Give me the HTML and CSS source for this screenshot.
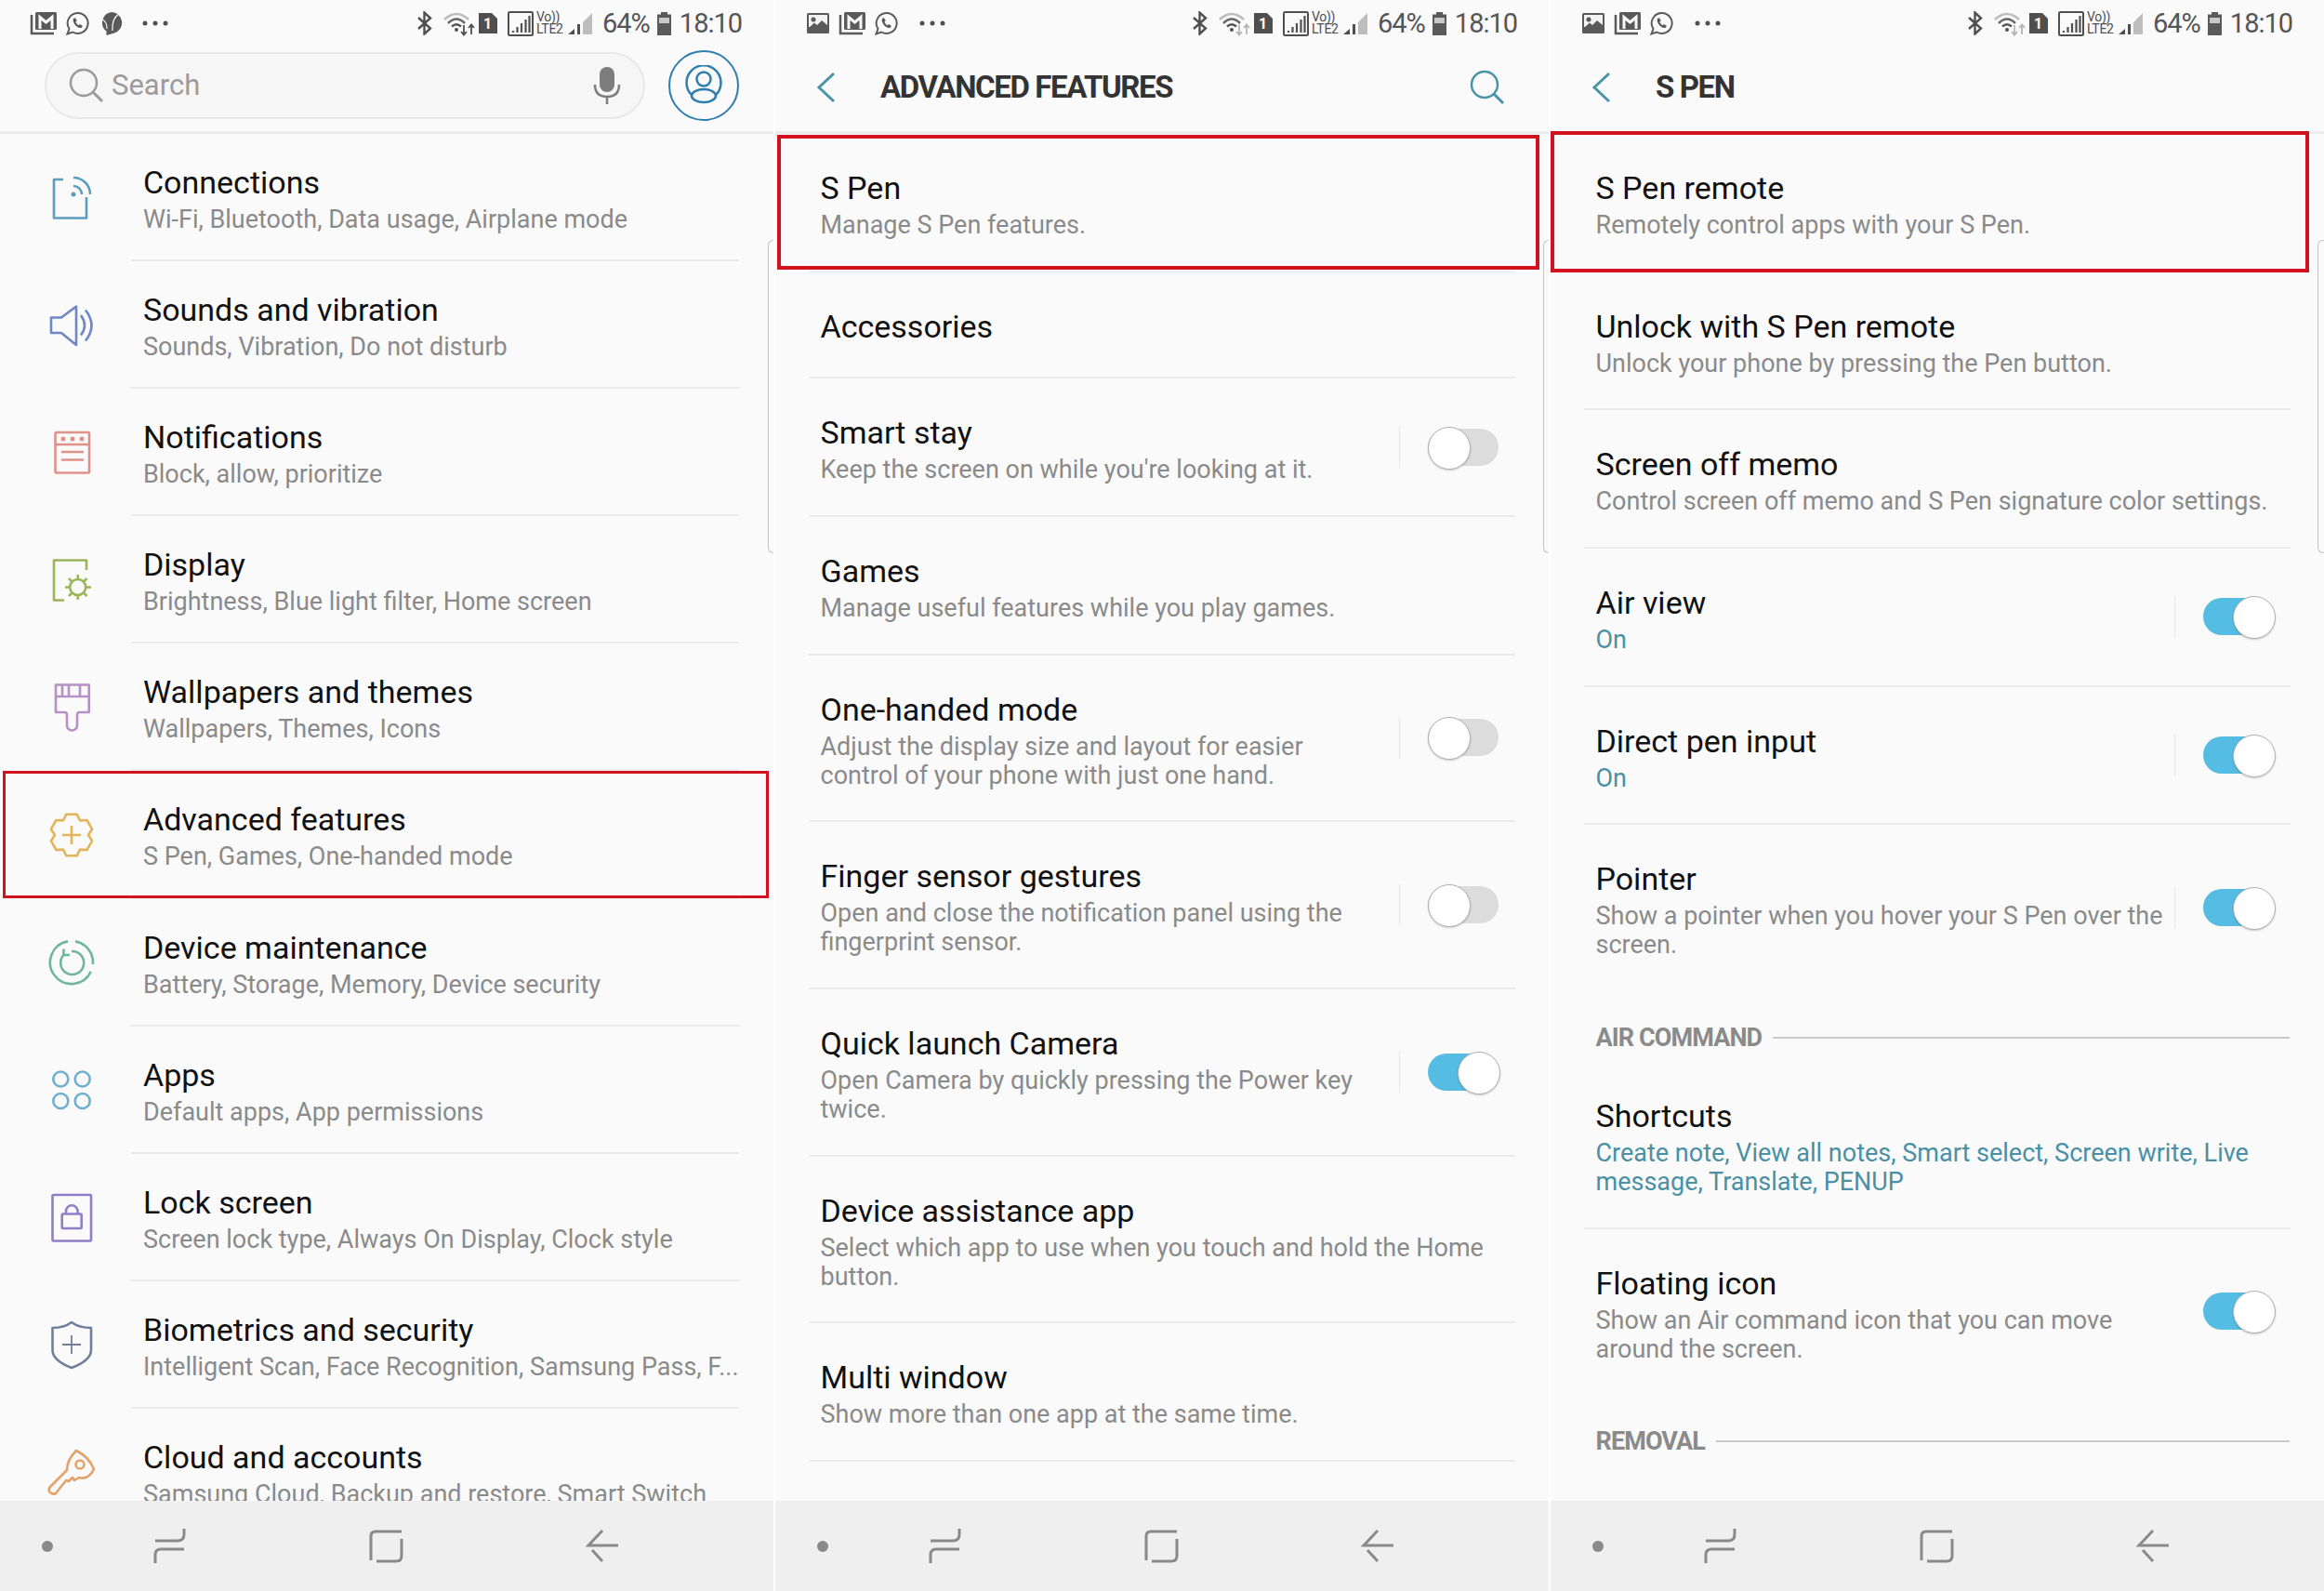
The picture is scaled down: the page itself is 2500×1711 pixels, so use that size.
FILE: index.html
```html
<!DOCTYPE html>
<html lang="en">
<head>
    <meta charset="UTF-8">
    <title>Settings - S Pen remote</title>
    <link rel="stylesheet" href="styles.css">
</head>
<body>
    <!-- status bar icons, reused on all three screens -->
    <svg class="sprite" xmlns="http://www.w3.org/2000/svg">
        <symbol id="s-gmail" viewBox="0 0 30 26">
            <path d="M2 4V24H26" fill="none" stroke="#5a5a5a" stroke-width="2.5"/>
            <rect x="6" y="1" width="23" height="19" rx="1.5" fill="#5a5a5a"/>
            <path d="M11 19V6.5L17.5 12L24 6.5V19" fill="none" stroke="#fafafa" stroke-width="3"/>
        </symbol>
        <symbol id="s-whatsapp" viewBox="0 0 26 26">
            <path d="M13.5 2a11 11 0 1 1-5.4 20.5L2.500 24.500l2-5.500A11 11 0 0 1 13.500 2z" fill="none" stroke="#5a5a5a" stroke-width="2"/>
            <path d="M9.500 7.500C8 9 8.500 11.500 10.500 14.500C12.500 17 15 18.500 17.500 18L19 16L16 14L14.800 15.200C13 14.500 12 13 11.500 11.500L12.800 10L10.800 7.200Z" fill="#5a5a5a"/>
        </symbol>
        <symbol id="s-chat" viewBox="0 0 24 27">
            <path d="M12 1a11.500 11.500 0 0 1 3 22.500L6.500 26L6.500 21.500A11.500 11.500 0 0 1 12 1z" fill="#5a5a5a"/>
            <path d="M20 3Q12 8 13 21M2 9Q7 11 7 19" fill="none" stroke="#fafafa" stroke-width="1.200"/>
        </symbol>
        <symbol id="s-gallery" viewBox="0 0 24 22">
            <rect width="24" height="22" rx="1.500" fill="#5a5a5a"/>
            <rect x="2" y="2" width="20" height="13" fill="#f2f2f2"/>
            <circle cx="7" cy="7" r="2.500" fill="#5a5a5a"/>
            <path d="M2 16L8 10.500L11 13L16 8L22 13V18H2Z" fill="#5a5a5a"/>
        </symbol>
        <symbol id="s-bt" viewBox="0 0 17 26">
            <path d="M2 7L15 18.500L8.500 24.500V1.500L15 7.500L2 19" fill="none" stroke="#4f4f4f" stroke-width="2.400"/>
        </symbol>
        <symbol id="s-wifi" viewBox="0 0 34 27">
            <path d="M1 9Q14 -3 27 9" fill="none" stroke="#bdbdbd" stroke-width="2.500"/>
            <path d="M5 13Q14 4 23 13" fill="none" stroke="#666" stroke-width="2.500"/>
            <path d="M9 16.500Q14 12 19 16.500" fill="none" stroke="#555" stroke-width="2.500"/>
            <circle cx="14" cy="20" r="2" fill="#4f4f4f"/>
            <path d="M22 15V25M19 22L22 25.500L25 22M30 25V15M27 18L30 14.500L33 18" fill="none" stroke="currentColor" stroke-width="1.800"/>
        </symbol>
        <symbol id="s-sim" viewBox="0 0 22 22">
            <path d="M1 0H15L21 6V22H1Z" fill="#4f4f4f"/>
            <text x="10.500" y="17" class="sim-num">1</text>
        </symbol>
        <symbol id="s-signal" viewBox="0 0 28 27">
            <rect x="1" y="1" width="26" height="25" rx="1.500" fill="none" stroke="#4f4f4f" stroke-width="2"/>
            <path d="M6 23V21M10.500 23V17M15 23V13M19.500 23V9M23.500 23V5" stroke="#4f4f4f" stroke-width="2.200"/>
        </symbol>
        <symbol id="s-signal2" viewBox="0 0 27 25">
            <path d="M0 24L7 18V24ZM10 13H13V24H10Z" fill="#4f4f4f"/>
            <path d="M16 11L26 1V24H16Z" fill="#bdbdbd"/>
        </symbol>
        <symbol id="s-battery" viewBox="0 0 15 25">
            <path d="M4 0H11V2.500H15V25H0V2.500H4Z" fill="#5a5a5a"/>
            <rect x="2" y="6" width="11" height="6" fill="#c8c8c8"/>
        </symbol>
        <symbol id="s-dots" viewBox="0 0 28 6">
            <circle cx="3" cy="3" r="2.500" fill="#4f4f4f"/>
            <circle cx="14" cy="3" r="2.500" fill="#4f4f4f"/>
            <circle cx="25" cy="3" r="2.500" fill="#4f4f4f"/>
        </symbol>
        <symbol id="s-nav-recent" viewBox="0 0 35 39">
            <path d="M33 1V7Q33 14 26 14H2M33 23H8Q2 23 2 29V38" fill="none" stroke="#8a8a8a" stroke-width="3"/>
        </symbol>
        <symbol id="s-nav-home" viewBox="0 0 37 36">
            <path d="M35 2H7Q2 2 2 7V33M35 10V28Q35 34 29 34H8" fill="none" stroke="#8a8a8a" stroke-width="3"/>
        </symbol>
        <symbol id="s-nav-back" viewBox="0 0 36 37">
            <path d="M18 2L3 18H35M7 23L18 35" fill="none" stroke="#8a8a8a" stroke-width="3"/>
        </symbol>
        <symbol id="s-back" viewBox="0 0 22 34">
            <path d="M19 2L3 17L19 32" fill="none" stroke="#4a93a8" stroke-width="3"/>
        </symbol>
        <symbol id="s-search" viewBox="0 0 38 38">
            <circle cx="16" cy="16" r="14" fill="none" stroke="currentColor" stroke-width="2.500"/>
            <path d="M26 26L36 36" stroke="currentColor" stroke-width="3"/>
        </symbol>
    </svg>

    <div class="screens">

        <!-- settings -->
        <section class="panel">
            <div class="status">
                <svg class="ic ic-mail-first"><use href="#s-gmail"/></svg>
                <svg class="ic ic-wa"><use href="#s-whatsapp"/></svg>
                <svg class="ic ic-chat"><use href="#s-chat"/></svg>
                <svg class="ic ic-dots ic-dots-first"><use href="#s-dots"/></svg>
                <div class="status-right">
                    <svg class="ic ic-bt"><use href="#s-bt"/></svg>
                    <svg class="ic ic-wifi"><use href="#s-wifi"/></svg>
                    <svg class="ic ic-sim"><use href="#s-sim"/></svg>
                    <svg class="ic ic-signal"><use href="#s-signal"/></svg>
                    <span class="volte">Vo))<br>LTE2</span>
                    <svg class="ic ic-signal2"><use href="#s-signal2"/></svg>
                    <span class="percent">64%</span>
                    <svg class="ic ic-battery"><use href="#s-battery"/></svg>
                    <span class="clock">18:10</span>
                </div>
            </div>
            <header class="topbar topbar-search">
                <div class="searchbox">
                    <svg class="searchbox-icon"><use href="#s-search"/></svg>
                    <span class="searchbox-text">Search</span>
                    <svg class="mic" viewBox="0 0 30 40">
                        <rect x="7" y="0" width="16" height="27" rx="8" fill="#7d7d7d"/>
                        <path d="M2 19Q2 32 15 32Q28 32 28 19M15 32V40" fill="none" stroke="#7d7d7d" stroke-width="2.500"/>
                    </svg>
                </div>
                <div class="avatar">
                    <svg viewBox="0 0 44 44">
                        <path d="M9 32A18.500 18.500 0 1 1 35 32" fill="none" stroke="#2f7fae" stroke-width="2.500"/>
                        <circle cx="22" cy="15" r="7.500" fill="none" stroke="#2f7fae" stroke-width="2.500"/>
                        <ellipse cx="22" cy="33" rx="13" ry="7" fill="none" stroke="#2f7fae" stroke-width="2.500"/>
                    </svg>
                </div>
            </header>
            <div class="list">
                <div class="menu-row">
                    <svg class="menu-icon tint-blue" viewBox="0 0 56 56">
                        <path d="M19 8H9V49.500H44V27"/><circle cx="30" cy="24" r="2.500" class="dot"/>
                        <path d="M30 15A9 9 0 0 1 39 24M30 6A18 18 0 0 1 48 24"/>
                    </svg>
                    <div class="menu-body"><div class="title">Connections</div><div class="sub">Wi-Fi, Bluetooth, Data usage, Airplane mode</div></div>
                </div>
                <div class="menu-row">
                    <svg class="menu-icon tint-indigo" viewBox="0 0 56 56">
                        <path d="M6 19.500H17L33 7.500V49L17 36H6Z"/>
                        <path d="M38 17Q46 28 38 38.500M43 11.500Q56 28 43 44.500"/>
                    </svg>
                    <div class="menu-body"><div class="title">Sounds and vibration</div><div class="sub">Sounds, Vibration, Do not disturb</div></div>
                </div>
                <div class="menu-row">
                    <svg class="menu-icon tint-salmon" viewBox="0 0 56 56">
                        <rect x="10.500" y="6" width="36.500" height="43.500" rx="1"/>
                        <path d="M10.500 19H47M17 27H41M17 35.500H41"/>
                        <circle cx="19" cy="13" r="2.500" class="dot"/><circle cx="29" cy="13" r="2.500" class="dot"/><circle cx="39" cy="13" r="2.500" class="dot"/>
                    </svg>
                    <div class="menu-body"><div class="title">Notifications</div><div class="sub">Block, allow, prioritize</div></div>
                </div>
                <div class="menu-row">
                    <svg class="menu-icon tint-green" viewBox="0 0 56 56">
                        <path d="M20 49.500H9V6.500H44V17"/>
                        <circle cx="34.700" cy="35.500" r="8.500"/>
                        <path d="M34.700 22V27M34.700 44V49M21 35.500H26M43.500 35.500H49M25 26L28.500 29.500M41 41.500L44.500 45M44.500 26L41 29.500M28.500 41.500L25 45"/>
                    </svg>
                    <div class="menu-body"><div class="title">Display</div><div class="sub">Brightness, Blue light filter, Home screen</div></div>
                </div>
                <div class="menu-row">
                    <svg class="menu-icon tint-violet" viewBox="0 0 56 56">
                        <path d="M11 3.500H46.700V33H36.500Q34 33 34 36V47A5.500 5.500 0 0 1 23 47V36Q23 33 20.500 33H11Z"/>
                        <path d="M11 16H46.700M18 3.500V15M25 3.500V15M37 3.500V15"/>
                    </svg>
                    <div class="menu-body"><div class="title">Wallpapers and themes</div><div class="sub">Wallpapers, Themes, Icons</div></div>
                </div>
                <div class="menu-row">
                    <svg class="menu-icon tint-amber" viewBox="0 0 56 56">
                        <path d="M22.400 5.700H33.600L37 12.400L44.500 12L50.100 21.700L46 28L50.100 34.300L44.500 44L37 43.600L33.600 50.300H22.400L19 43.600L11.500 44L5.900 34.300L10 28L5.900 21.700L11.500 12L19 12.400Z"/>
                        <path d="M18 28H38M28 18V38"/>
                    </svg>
                    <div class="menu-body"><div class="title">Advanced features</div><div class="sub">S Pen, Games, One-handed mode</div></div>
                </div>
                <div class="menu-row">
                    <svg class="menu-icon tint-teal" viewBox="0 0 56 56">
                        <path d="M32 5.400A23 23 0 0 1 50.900 30M48.800 37.700A23 23 0 1 1 24 5.400"/>
                        <path d="M20 19.500A12.500 12.500 0 1 0 28 16M19.500 13.500V20H26"/>
                    </svg>
                    <div class="menu-body"><div class="title">Device maintenance</div><div class="sub">Battery, Storage, Memory, Device security</div></div>
                </div>
                <div class="menu-row">
                    <svg class="menu-icon tint-sky" viewBox="0 0 56 56">
                        <circle cx="16.300" cy="16.500" r="8"/><circle cx="39.700" cy="16.500" r="8"/>
                        <circle cx="16.300" cy="40" r="8"/><circle cx="39.700" cy="40" r="8"/>
                    </svg>
                    <div class="menu-body"><div class="title">Apps</div><div class="sub">Default apps, App permissions</div></div>
                </div>
                <div class="menu-row">
                    <svg class="menu-icon tint-purple" viewBox="0 0 56 56">
                        <rect x="7.500" y="4" width="41.500" height="49.500" rx="1"/>
                        <rect x="17.700" y="24.500" width="21" height="15.500" rx="1"/>
                        <path d="M22 24.500V21.500A6.200 6.200 0 0 1 34.500 21.500V24.500"/>
                    </svg>
                    <div class="menu-body"><div class="title">Lock screen</div><div class="sub">Screen lock type, Always On Display, Clock style</div></div>
                </div>
                <div class="menu-row">
                    <svg class="menu-icon tint-slate" viewBox="0 0 56 56">
                        <path d="M7.500 10Q20 10 28 4Q36 10 49 10V34Q49 45 28 53Q7.500 45 7.500 34Z"/>
                        <path d="M18 28H38M28 18V38" class="thin"/>
                    </svg>
                    <div class="menu-body"><div class="title">Biometrics and security</div><div class="sub sub-cut">Intelligent Scan, Face Recognition, Samsung Pass, F...</div></div>
                </div>
                <div class="menu-row">
                    <svg class="menu-icon tint-orange" viewBox="0 0 56 56">
                        <path d="M33 5Q47 12 52 25Q46 37 36 34L31 37L29 34L25 38L22 37L11 51Q7 53 4 49Q3 46 5 44L23 26Q23 15 33 5Z"/>
                        <circle cx="37" cy="20" r="4.500"/>
                    </svg>
                    <div class="menu-body"><div class="title">Cloud and accounts</div><div class="sub">Samsung Cloud, Backup and restore, Smart Switch</div></div>
                </div>
            </div>
            <nav class="navbar">
                <span class="nav-dot"></span>
                <svg class="nav-recent"><use href="#s-nav-recent"/></svg>
                <svg class="nav-home"><use href="#s-nav-home"/></svg>
                <svg class="nav-back"><use href="#s-nav-back"/></svg>
            </nav>
            <div class="mark mark-advanced"></div>
            <div class="edge-handle"></div>
        </section>

        <!-- advanced features -->
        <section class="panel">
            <div class="status">
                <svg class="ic ic-gallery"><use href="#s-gallery"/></svg>
                <svg class="ic ic-mail"><use href="#s-gmail"/></svg>
                <svg class="ic ic-wa2"><use href="#s-whatsapp"/></svg>
                <svg class="ic ic-dots ic-dots-second"><use href="#s-dots"/></svg>
                <div class="status-right">
                    <svg class="ic ic-bt"><use href="#s-bt"/></svg>
                    <svg class="ic ic-wifi wifi-idle"><use href="#s-wifi"/></svg>
                    <svg class="ic ic-sim"><use href="#s-sim"/></svg>
                    <svg class="ic ic-signal"><use href="#s-signal"/></svg>
                    <span class="volte">Vo))<br>LTE2</span>
                    <svg class="ic ic-signal2"><use href="#s-signal2"/></svg>
                    <span class="percent">64%</span>
                    <svg class="ic ic-battery"><use href="#s-battery"/></svg>
                    <span class="clock">18:10</span>
                </div>
            </div>
            <header class="topbar">
                <svg class="back"><use href="#s-back"/></svg>
                <h1 class="page-title">ADVANCED FEATURES</h1>
                <svg class="top-search"><use href="#s-search"/></svg>
            </header>
            <div class="list">
                <div class="row"><div class="row-text"><div class="title">S Pen</div><div class="sub">Manage S Pen features.</div></div></div>
                <div class="row"><div class="row-text"><div class="title">Accessories</div></div></div>
                <div class="row">
                    <div class="row-text"><div class="title">Smart stay</div><div class="sub">Keep the screen on while you're looking at it.</div></div>
                    <span class="sep"></span><span class="switch"></span>
                </div>
                <div class="row"><div class="row-text"><div class="title">Games</div><div class="sub">Manage useful features while you play games.</div></div></div>
                <div class="row">
                    <div class="row-text"><div class="title">One-handed mode</div><div class="sub">Adjust the display size and layout for easier<br>control of your phone with just one hand.</div></div>
                    <span class="sep"></span><span class="switch"></span>
                </div>
                <div class="row">
                    <div class="row-text"><div class="title">Finger sensor gestures</div><div class="sub">Open and close the notification panel using the<br>fingerprint sensor.</div></div>
                    <span class="sep"></span><span class="switch"></span>
                </div>
                <div class="row">
                    <div class="row-text"><div class="title">Quick launch Camera</div><div class="sub">Open Camera by quickly pressing the Power key<br>twice.</div></div>
                    <span class="sep"></span><span class="switch on"></span>
                </div>
                <div class="row"><div class="row-text"><div class="title">Device assistance app</div><div class="sub">Select which app to use when you touch and hold the Home<br>button.</div></div></div>
                <div class="row"><div class="row-text"><div class="title">Multi window</div><div class="sub">Show more than one app at the same time.</div></div></div>
            </div>
            <nav class="navbar">
                <span class="nav-dot"></span>
                <svg class="nav-recent"><use href="#s-nav-recent"/></svg>
                <svg class="nav-home"><use href="#s-nav-home"/></svg>
                <svg class="nav-back"><use href="#s-nav-back"/></svg>
            </nav>
            <div class="mark mark-spen"></div>
            <div class="edge-handle"></div>
        </section>

        <!-- s pen -->
        <section class="panel">
            <div class="status">
                <svg class="ic ic-gallery"><use href="#s-gallery"/></svg>
                <svg class="ic ic-mail"><use href="#s-gmail"/></svg>
                <svg class="ic ic-wa2"><use href="#s-whatsapp"/></svg>
                <svg class="ic ic-dots ic-dots-second"><use href="#s-dots"/></svg>
                <div class="status-right">
                    <svg class="ic ic-bt"><use href="#s-bt"/></svg>
                    <svg class="ic ic-wifi wifi-idle"><use href="#s-wifi"/></svg>
                    <svg class="ic ic-sim"><use href="#s-sim"/></svg>
                    <svg class="ic ic-signal"><use href="#s-signal"/></svg>
                    <span class="volte">Vo))<br>LTE2</span>
                    <svg class="ic ic-signal2"><use href="#s-signal2"/></svg>
                    <span class="percent">64%</span>
                    <svg class="ic ic-battery"><use href="#s-battery"/></svg>
                    <span class="clock">18:10</span>
                </div>
            </div>
            <header class="topbar">
                <svg class="back"><use href="#s-back"/></svg>
                <h1 class="page-title">S PEN</h1>
            </header>
            <div class="list">
                <div class="row"><div class="row-text"><div class="title">S Pen remote</div><div class="sub">Remotely control apps with your S Pen.</div></div></div>
                <div class="row"><div class="row-text"><div class="title">Unlock with S Pen remote</div><div class="sub">Unlock your phone by pressing the Pen button.</div></div></div>
                <div class="row"><div class="row-text"><div class="title">Screen off memo</div><div class="sub">Control screen off memo and S Pen signature color settings.</div></div></div>
                <div class="row">
                    <div class="row-text"><div class="title">Air view</div><div class="sub link">On</div></div>
                    <span class="sep"></span><span class="switch on"></span>
                </div>
                <div class="row">
                    <div class="row-text"><div class="title">Direct pen input</div><div class="sub link">On</div></div>
                    <span class="sep"></span><span class="switch on"></span>
                </div>
                <div class="row no-line">
                    <div class="row-text"><div class="title">Pointer</div><div class="sub">Show a pointer when you hover your S Pen over the<br>screen.</div></div>
                    <span class="sep"></span><span class="switch on"></span>
                </div>
                <div class="group"><span class="group-name">AIR COMMAND</span><span class="group-line"></span></div>
                <div class="row"><div class="row-text"><div class="title">Shortcuts</div><div class="sub link">Create note, View all notes, Smart select, Screen write, Live<br>message, Translate, PENUP</div></div></div>
                <div class="row no-line">
                    <div class="row-text"><div class="title">Floating icon</div><div class="sub">Show an Air command icon that you can move<br>around the screen.</div></div>
                    <span class="sep sep-blank"></span><span class="switch on"></span>
                </div>
                <div class="group"><span class="group-name">REMOVAL</span><span class="group-line"></span></div>
            </div>
            <nav class="navbar">
                <span class="nav-dot"></span>
                <svg class="nav-recent"><use href="#s-nav-recent"/></svg>
                <svg class="nav-home"><use href="#s-nav-home"/></svg>
                <svg class="nav-back"><use href="#s-nav-back"/></svg>
            </nav>
            <div class="mark mark-remote"></div>
            <div class="edge-handle edge-handle-last"></div>
        </section>

    </div>
</body>
</html>
```

FILE: styles.css
```css
/* General */
* {
    box-sizing: border-box;
}

html, body {
    margin: 0;
    padding: 0;
    background-color: #ffffff;
}

body {
    font-family: "Roboto", "Liberation Sans", sans-serif;
    width: 2500px;
    height: 1711px;
    overflow: hidden;
}

.sprite {
    position: absolute;
    width: 0;
    height: 0;
}

.screens {
    display: flex;
    gap: 2px;
    height: 1711px;
}

.panel {
    position: relative;
    width: 832px;
    height: 1711px;
    display: flex;
    flex-direction: column;
    background-color: #fafafa;
}

/* Status bar */
.status {
    height: 50px;
    flex: none;
    display: flex;
    align-items: center;
    padding-left: 32px;
    color: #555555;
}

.ic {
    flex: none;
    display: block;
}

.ic-mail-first { width: 30px; height: 26px; }
.ic-wa { width: 26px; height: 26px; margin-left: 8px; }
.ic-chat { width: 24px; height: 27px; margin-left: 12px; }
.ic-dots { width: 28px; height: 6px; }
.ic-dots-first { margin-left: 21px; }

.ic-gallery { width: 24px; height: 22px; margin-left: 2px; }
.ic-mail { width: 30px; height: 26px; margin-left: 10px; }
.ic-wa2 { width: 26px; height: 26px; margin-left: 8px; }
.ic-dots-second { margin-left: 23px; }

.status-right {
    display: flex;
    align-items: center;
    position: absolute;
    left: 448px;
    top: 0;
    height: 50px;
}

.ic-bt { width: 17px; height: 26px; }
.ic-wifi { width: 34px; height: 27px; margin-left: 12px; color: #4f4f4f; }
.wifi-idle { color: #b5b5b5; }
.ic-sim { width: 22px; height: 22px; margin-left: 3px; }
.ic-signal { width: 28px; height: 27px; margin-left: 10px; }
.ic-signal2 { width: 27px; height: 25px; margin-left: 3px; }
.ic-battery { width: 15px; height: 25px; margin-left: 8px; }

.sim-num {
    font-family: "Roboto", sans-serif;
    font-size: 16px;
    font-weight: 700;
    fill: #fafafa;
    text-anchor: middle;
}

.volte {
    font-size: 14px;
    line-height: 13px;
    color: #4f4f4f;
    margin-left: 3px;
    width: 31px;
    letter-spacing: -0.3px;
}

.percent,
.clock {
    font-size: 29px;
    line-height: 34px;
    letter-spacing: -1px;
    color: #555555;
}

.percent { margin-left: 10px; }
.clock { margin-left: 9px; }

/* Top bar */
.topbar {
    height: 94px;
    flex: none;
    display: flex;
    align-items: center;
    border-bottom: 3px solid #ececec;
    padding-bottom: 4px;
}

.topbar-search {
    padding-left: 48px;
    padding-bottom: 8px;
}

.searchbox {
    width: 646px;
    height: 72px;
    border: 2px solid #e8e8e8;
    border-radius: 36px;
    background-color: #f6f6f6;
    display: flex;
    align-items: center;
    padding-left: 24px;
    position: relative;
}

.searchbox-icon {
    width: 38px;
    height: 38px;
    color: #9b9b9b;
}

.searchbox-text {
    font-size: 31px;
    color: #9b9b9b;
    margin-left: 8px;
}

.mic {
    width: 30px;
    height: 40px;
    margin-left: auto;
    margin-right: 24px;
}

.avatar {
    width: 76px;
    height: 76px;
    margin-left: 25px;
    border: 2px solid #2f7fae;
    border-radius: 50%;
    display: flex;
    align-items: center;
    justify-content: center;
}

.avatar svg {
    width: 44px;
    height: 44px;
}

.back {
    width: 22px;
    height: 34px;
    margin-left: 44px;
}

.page-title {
    margin: 0 0 0 47px;
    font-size: 33px;
    font-weight: 700;
    color: #333333;
    letter-spacing: -1.4px;
}

.top-search {
    width: 38px;
    height: 38px;
    color: #4a93a8;
    margin-left: auto;
    margin-right: 47px;
}

/* Lists */
.list {
    flex: 1;
    min-height: 0;
    overflow: hidden;
}

.title {
    font-size: 34px;
    line-height: 44px;
    color: #111111;
}

.sub {
    font-size: 27px;
    line-height: 31px;
    margin-top: 3px;
    color: #8a8a8a;
}

.link {
    color: #4a90a4;
}

/* Rows of the settings screen */
.menu-row {
    height: 137.1px;
    display: flex;
    align-items: center;
    padding-left: 48.7px;
}

.menu-icon {
    width: 56px;
    height: 56px;
    flex: none;
    overflow: visible;
    fill: none;
    stroke-width: 2.6;
    stroke-linejoin: round;
}

.menu-icon .dot {
    stroke: none;
    fill: currentColor;
}

.menu-icon .thin {
    stroke-width: 1.800;
}

.tint-blue { color: #5d9dc0; stroke: #5d9dc0; }
.tint-indigo { color: #6f87c4; stroke: #6f87c4; }
.tint-salmon { color: #df9289; stroke: #df9289; }
.tint-green { color: #9bb55a; stroke: #9bb55a; }
.tint-violet { color: #b690c6; stroke: #b690c6; }
.tint-amber { color: #e3b45a; stroke: #e3b45a; }
.tint-teal { color: #6fb5a0; stroke: #6fb5a0; }
.tint-sky { color: #6fb0d0; stroke: #6fb0d0; }
.tint-purple { color: #8f7fc8; stroke: #8f7fc8; }
.tint-slate { color: #6f7f9a; stroke: #6f7f9a; }
.tint-orange { color: #e3a26a; stroke: #e3a26a; }

.menu-body {
    flex: 1;
    height: 100%;
    margin-left: 36.3px;
    margin-right: 37px;
    padding: 30px 0 0 13px;
    border-bottom: 2px solid #ececec;
    white-space: nowrap;
}

/* Rows of the two sub screens */
.row {
    margin: 0 36px;
    padding-left: 12.5px;
    display: flex;
    align-items: center;
    border-bottom: 2px solid #ececec;
}

.no-line {
    border-bottom-color: transparent;
}

.row-text {
    flex: 1;
    min-width: 0;
    padding: 36px 0 32.67px;
    white-space: nowrap;
}

.sep {
    width: 1px;
    height: 45px;
    background-color: #e6e6e6;
    margin-right: 30px;
}

.sep-blank {
    background-color: transparent;
}

.switch {
    position: relative;
    flex: none;
    width: 76px;
    height: 40px;
    margin-right: 18px;
    border-radius: 20px;
    background-color: #dcdcdc;
}

.switch::after {
    content: "";
    position: absolute;
    left: 0;
    top: -2px;
    width: 44px;
    height: 44px;
    border-radius: 50%;
    border: 1.500px solid #b0b0b0;
    background-color: #ffffff;
    box-shadow: 0 1px 2px rgba(0, 0, 0, 0.2);
}

.switch.on {
    background-color: #55bde3;
}

.switch.on::after {
    left: 32px;
}

.group {
    height: 75px;
    padding: 23px 37px 0 48.5px;
    display: flex;
    align-items: center;
    gap: 12px;
}

.group-name {
    font-size: 27px;
    font-weight: 700;
    letter-spacing: -0.9px;
    color: #8a8a8a;
}

.group-line {
    flex: 1;
    height: 2px;
    background-color: #c9c9c9;
}

/* Bottom navigation */
.navbar {
    height: 97px;
    flex: none;
    display: flex;
    align-items: center;
    background-color: #efefef;
}

.nav-dot {
    width: 12px;
    height: 12px;
    margin-left: 45px;
    border-radius: 50%;
    background-color: #8a8a8a;
}

.nav-recent { width: 35px; height: 39px; margin-left: 108px; }
.nav-home { width: 37px; height: 36px; margin-left: 197px; }
.nav-back { width: 36px; height: 37px; margin-left: 196px; }

/* Red marks over the screenshot */
.mark {
    position: absolute;
    border-style: solid;
    border-color: #d2121f;
    pointer-events: none;
}

.mark-advanced {
    left: 3px;
    top: 829px;
    width: 824px;
    height: 137px;
    border-width: 3px;
}

.mark-spen {
    left: 2px;
    top: 145px;
    width: 820px;
    height: 145px;
    border-width: 4px;
}

.mark-remote {
    left: 0;
    top: 141px;
    width: 816px;
    height: 152px;
    border-width: 4px;
}

/* Edge panel handle */
.edge-handle {
    position: absolute;
    right: 0;
    top: 258px;
    width: 6px;
    height: 337px;
    border: 1px solid #c4c4c4;
    border-right: none;
    border-radius: 6px 0 0 6px;
}

.edge-handle-last {
    width: 7px;
}
```
